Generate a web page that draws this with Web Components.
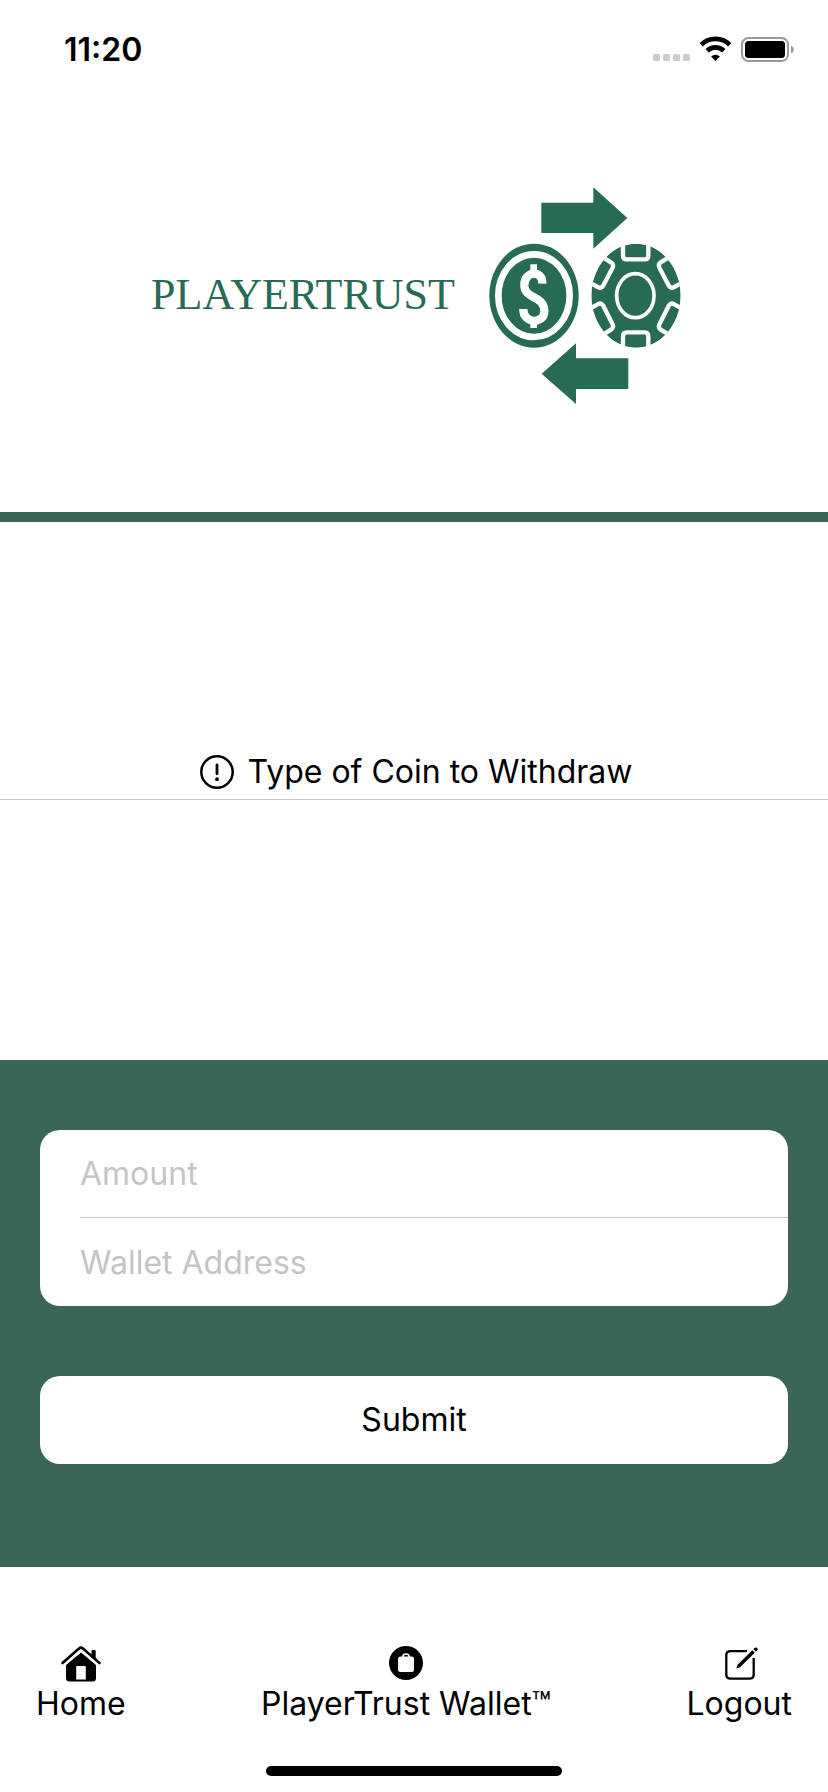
<!DOCTYPE html>
<html lang="en">
<head>
<meta charset="utf-8">
<meta name="viewport" content="width=device-width, initial-scale=1">
<title>PlayerTrust Wallet</title>
<style>
body { margin: 0; background: #fff; color: #000; font: 32px/40px Inter, "Liberation Sans", sans-serif; }
</style>
</head>
<body>
<wallet-app></wallet-app>
<script>
function define(name, html) {
  const template = document.createElement('template');
  template.innerHTML = html;
  customElements.define(name, class extends HTMLElement {
    constructor() {
      super();
      this.attachShadow({ mode: 'open' }).append(template.content.cloneNode(true));
    }
    connectedCallback() {
      const input = this.shadowRoot.querySelector('input');
      const label = this.getAttribute('label');
      if (input && label) {
        input.placeholder = label;
        input.setAttribute('aria-label', label);
      }
      const link = this.shadowRoot.querySelector('a');
      if (link) link.href = this.getAttribute('to') || '#';
    }
  });
}

define('status-bar', `
<style>
:host { display: flex; justify-content: space-between; align-items: center; height: 100px; padding: 0 32px 0 64px; box-sizing: border-box; }
time { font-size: 32px; font-weight: 600; line-height: 40px; }
svg { display: block; }
</style>
<time>11:20</time>
<svg width="144" height="28" viewBox="0 0 144 28" role="img" aria-label="Wi-Fi connected, battery full">
  <g fill="#ccc"><rect x="1" y="18" width="7" height="7" rx="1.5"/><rect x="11" y="18" width="7" height="7" rx="1.5"/><rect x="21" y="18" width="7" height="7" rx="1.5"/><rect x="31" y="18" width="7" height="7" rx="1.5"/></g>
  <g fill="none" stroke="#000" stroke-width="4.8"><path d="M49.3 8.7a20.3 20.3 0 0 1 28.4 0"/><path d="M55.2 14.8a12 12 0 0 1 16.6 0"/></g>
  <path d="M63.5 25l-4.4-4.5a6.3 6.3 0 0 1 8.8 0z"/>
  <rect x="90" y="2" width="46" height="23" rx="6.5" fill="none" stroke="#999" stroke-width="2"/>
  <rect x="93" y="5" width="40" height="17" rx="3.5"/>
  <path d="M139 9.500q3 1.4 3 4t-3 4z" fill="#999"/>
</svg>`);

define('brand-header', `
<style>
:host { display: flex; justify-content: center; align-items: center; gap: 16px; padding: 70px 0 92px 24px; border-bottom: 10px solid #3b6655; color: #276a55; }
h1 { margin: 0; font: 400 44px/56px "Liberation Serif", serif; }
svg { display: block; }
</style>
<h1>PLAYERTRUST</h1>
<svg width="230" height="250" viewBox="0 0 690 750" fill="currentColor" aria-hidden="true">
  <path d="M211 98H367V52L469 144L367 236V189H211z"/>
  <path d="M472 657H315V702L212 611L315 520V565H472z"/>
  <ellipse cx="189" cy="377" rx="134" ry="156"/>
  <ellipse cx="189" cy="377" rx="107" ry="124" fill="none" stroke="#fff" stroke-width="20"/>
  <g fill="none" stroke="#fff" stroke-width="25"><path d="M214 341C216 298 158 302 160 347C163 390 219 374 220 424C220 463 156 463 157 417"/><path d="M188 283V315M188 443V474" stroke-width="20"/></g>
  <clipPath id="chip"><ellipse cx="495" cy="377" rx="134" ry="156"/></clipPath>
  <g clip-path="url(#chip)">
    <ellipse cx="495" cy="377" rx="134" ry="156"/>
    <g fill="none" stroke="#fff" stroke-width="13" stroke-linejoin="round">
      <path d="M456 210V257Q456 268 467 268H521Q532 268 532 257V210"/>
      <path d="M456 544V499Q456 487 467 487H521Q532 487 532 499V544"/>
      <path d="M393 260L420 277Q430 284 424 295L396 348Q390 357 380 351L354 337"/>
      <path d="M597 260L569 277Q560 284 566 295L594 348Q600 357 610 351L636 337"/>
      <path d="M393 496L420 479Q430 472 424 461L396 406Q390 397 380 403L354 417"/>
      <path d="M597 496L569 479Q560 472 566 461L594 406Q600 397 610 403L636 417"/>
    </g>
  </g>
  <ellipse cx="493" cy="377" rx="56" ry="66" fill="none" stroke="#fff" stroke-width="11"/>
</svg>`);

define('coin-picker', `
<style>
:host { display: block; padding: 220px 0 260px; }
h2 { display: flex; justify-content: center; align-items: center; gap: 14px; margin: 0; padding: 10px 0 7px 4px; border-bottom: 1px solid #c6c6c8; font-size: 32px; font-weight: 400; line-height: 40px; }
svg { display: block; }
</style>
<h2><svg width="34" height="34" viewBox="0 0 34 34" aria-hidden="true"><circle cx="17" cy="17" r="15.7" fill="none" stroke="#000" stroke-width="2.5"/><path d="M17 10V18.8" stroke="#000" stroke-width="2.8" stroke-linecap="round"/><circle cx="17" cy="24.2" r="1.9"/></svg><slot></slot></h2>`);

define('form-field', `
<style>
:host { display: block; padding-left: 40px; }
input { display: block; width: 100%; height: 88px; box-sizing: border-box; margin: 0; padding: 0; border: 0; border-bottom: var(--divider, 0); background: none; color: #000; font: inherit; outline: none; }
input::placeholder { color: #c4c4c6; opacity: 1; }
</style>
<input type="text">`);

define('withdraw-form', `
<style>
:host { display: block; background: #3b6655; }
form { display: grid; gap: 70px; margin: 0; padding: 70px 40px 103px; }
.card { background: #fff; border-radius: 20px; overflow: hidden; }
.divided { --divider: 1px solid #c6c6c8; }
button { height: 88px; border: 0; border-radius: 20px; background: #fff; color: #000; font: inherit; }
</style>
<form>
  <div class="card"><form-field class="divided" label="Amount"></form-field><form-field label="Wallet Address"></form-field></div>
  <button type="button">Submit</button>
</form>`);

define('tab-link', `
<style>
:host { display: block; }
a { display: flex; flex-direction: column; align-items: center; gap: 2px; color: #000; text-decoration: none; white-space: nowrap; }
::slotted(svg) { display: block; }
</style>
<a><slot name="icon"></slot><slot></slot></a>`);

define('tab-bar', `
<style>
:host { display: block; padding: 79px 0 16px; }
nav { display: flex; justify-content: space-between; padding: 0 36px; }
.indicator { width: 296px; height: 10px; margin: 42px auto 0; border-radius: 5px; background: #000; }
</style>
<nav aria-label="Main">
  <tab-link to="#home"><svg slot="icon" width="40" height="36" viewBox="0 0 40 36" aria-hidden="true">
    <path d="M1.5 17L18 2.5Q20 .9 22 2.5L38.500 17" fill="none" stroke="#000" stroke-width="2.600" stroke-linecap="round"/>
    <path d="M30.500 5Q30.500 4 31.500 4H33.500Q34.700 4 34.700 5V13L30.500 9.500z"/>
    <path fill-rule="evenodd" d="M5 19L20 6.500L35 19V32Q35 35.500 31.500 35.500H8.500Q5 35.500 5 32zM16 20Q15.200 20 15.200 21V33.500H24.800V21Q24.800 20 24 20z"/>
  </svg>Home</tab-link>
  <tab-link to="#wallet"><svg slot="icon" width="34" height="36" viewBox="0 0 34 36" aria-hidden="true">
    <circle cx="17" cy="17" r="17"/>
    <path d="M11.500 10.500H22.500Q25 10.500 25 13V23.500Q25 26 22.500 26H11.500Q9 26 9 23.500V13Q9 10.500 11.500 10.500z" fill="#fff"/>
    <path d="M13.700 11.500Q13.700 8 17 8T20.300 11.500" fill="none" stroke="#fff" stroke-width="1.600"/>
  </svg>PlayerTrust Wallet™</tab-link>
  <tab-link to="#logout"><svg slot="icon" width="38" height="36" viewBox="-4 0 38 36" aria-hidden="true">
    <path d="M23 5.200H6.500Q2.300 5.200 2.300 9.400V28.500Q2.300 32.700 6.500 32.700H25.500Q29.700 32.700 29.700 28.500V12" fill="none" stroke="#000" stroke-width="2.300"/>
    <path d="M12.200 22.600L13.600 18.700L28.300 4.200L30.800 6.700L16.100 21.200z"/><path d="M29.400 3.100L30.800 1.800Q32.200 .9 33.200 2T33.200 4.300L31.900 5.600z"/>
  </svg>Logout</tab-link>
</nav>
<div class="indicator"></div>`);

define('wallet-app', `
<style>:host { display: block; }</style>
<status-bar></status-bar>
<brand-header></brand-header>
<main>
  <coin-picker>Type of Coin to Withdraw</coin-picker>
  <withdraw-form></withdraw-form>
</main>
<tab-bar></tab-bar>`);
</script>
</body>
</html>
